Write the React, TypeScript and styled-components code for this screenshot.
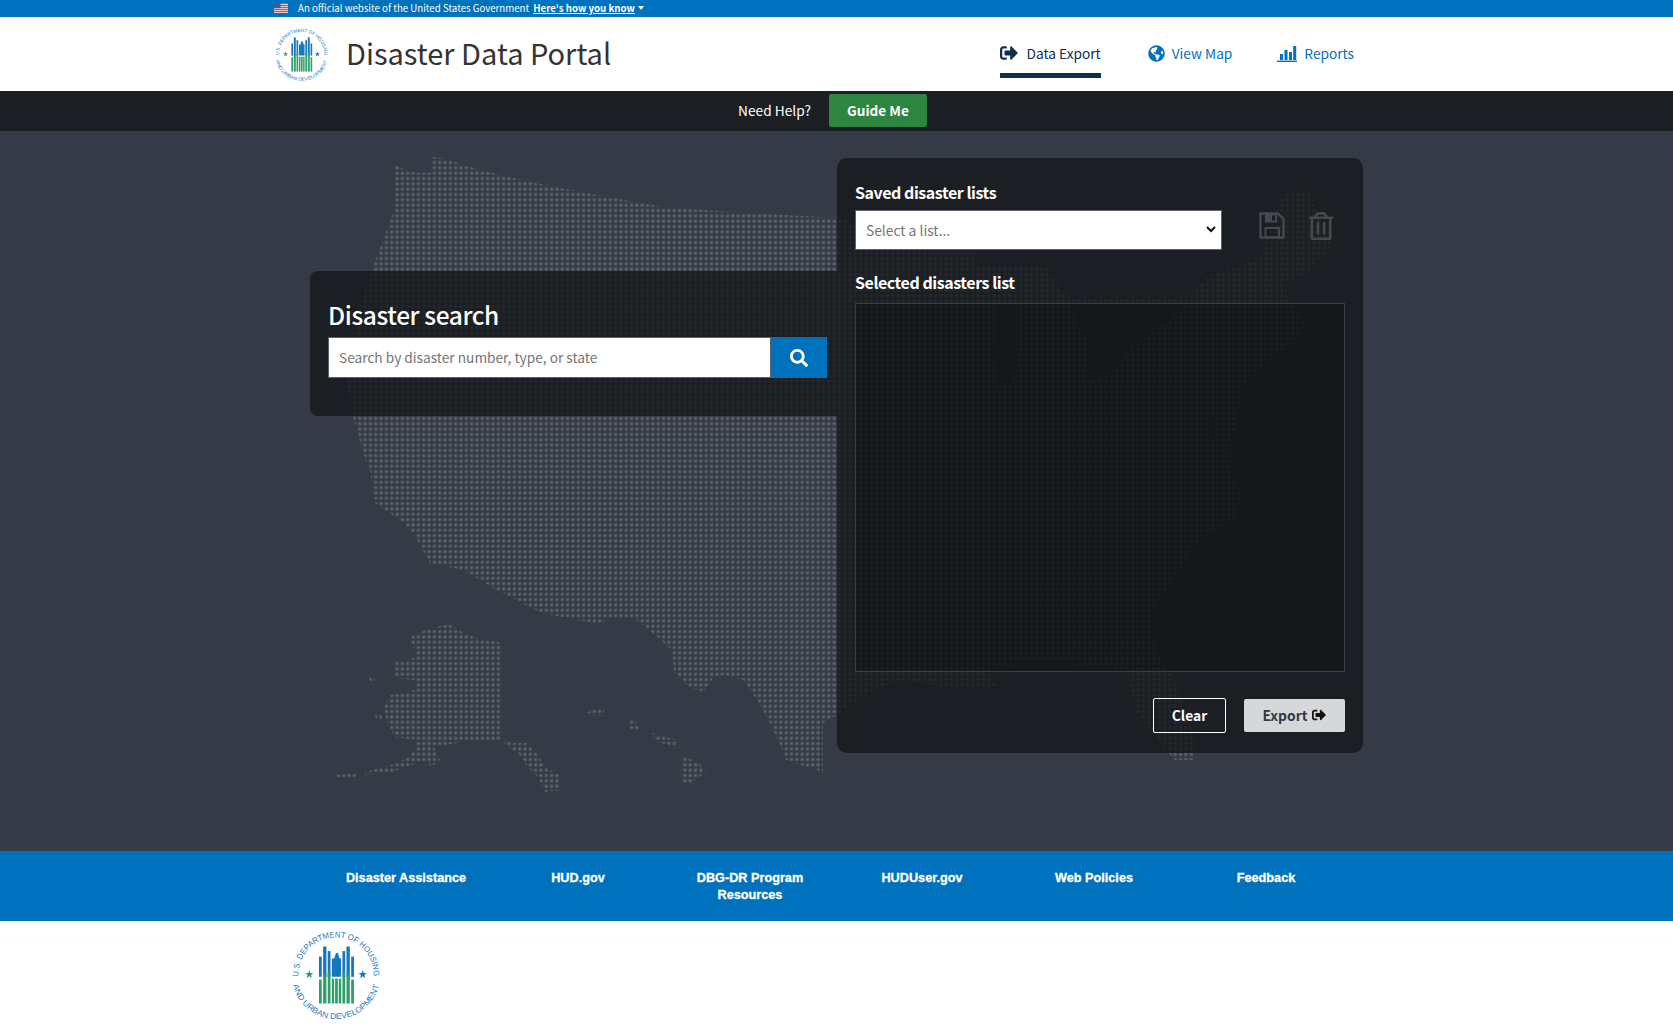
import React from "react";
import styled, { createGlobalStyle } from "styled-components";
import { FaSignOutAlt, FaGlobeAmericas, FaSearch, FaRegTrashAlt } from "react-icons/fa";

const SANS = `"Noto Sans CJK JP", "Source Sans Pro", "Noto Sans", sans-serif`;

const Global = createGlobalStyle`
  html, body { margin: 0; padding: 0; background: #fff; }
  body { font-family: ${SANS}; color: #212121; }
  * { box-sizing: border-box; }
`;

const Page = styled.div`
  width: 1673px;
  height: 1029px;
  overflow: hidden;
  display: flex;
  flex-direction: column;
`;

const Banner = styled.div`
  height: 17px;
  background: #0071bc;
  color: #fff;
  font-size: 9.7px;
  line-height: 16px;
  padding: 0 0 2px 274px;
  display: flex;
  align-items: center;
`;
const BannerText = styled.span`
  margin-left: 10px;
  white-space: nowrap;
`;
const BannerLink = styled.a`
  margin-left: 4px;
  font-weight: 700;
  color: #fff;
  text-decoration: underline;
  white-space: nowrap;
`;
const Caret = styled.span`
  margin-left: 3px;
  width: 0;
  height: 0;
  border-left: 3.5px solid transparent;
  border-right: 3.5px solid transparent;
  border-top: 4px solid #fff;
`;

const Header = styled.header`
  height: 74px;
  background: #fff;
  display: flex;
  align-items: center;
  padding-left: 274px;
`;
const Title = styled.h1`
  margin: 0 0 4px 17px;
  font-size: 29px;
  line-height: 40px;
  font-weight: 400;
  color: #333;
  white-space: nowrap;
`;
const Nav = styled.nav`
  margin-left: auto;
  margin-right: 319px;
  display: flex;
  gap: 45px;
  align-self: stretch;
`;
const NavItem = styled.a<{ $active?: boolean }>`
  display: flex;
  align-items: center;
  gap: ${(p) => (p.$active ? 9 : 7)}px;
  height: 61px;
  padding-top: 16px;
  margin-right: ${(p) => (p.$active ? 2 : 0)}px;
  font-size: 13.7px;
  color: ${(p) => (p.$active ? "#112e51" : "#0071bc")};
  border-bottom: 5px solid ${(p) => (p.$active ? "#112e51" : "transparent")};
  white-space: nowrap;
  svg { flex: none; }
`;

const HelpBar = styled.div`
  height: 40px;
  background: #1b1e23;
  display: flex;
  align-items: center;
  justify-content: center;
  gap: 18px;
  padding: 0 8px 1px 0;
`;
const HelpText = styled.span`
  color: #fff;
  font-size: 13.7px;
  margin-bottom: 2px;
`;
const GuideButton = styled.button`
  width: 98px;
  height: 33px;
  border: 0;
  border-radius: 2px;
  background: #2e8540;
  color: #fff;
  font-family: ${SANS};
  font-weight: 700;
  font-size: 13.6px;
  padding: 0 0 2px;
`;

const Main = styled.main`
  position: relative;
  height: 720px;
  background: #343a46;
  padding-top: 27px;
`;
const MapLayer = styled.svg`
  position: absolute;
  left: 0;
  top: 0;
`;
const Columns = styled.div`
  position: relative;
  width: 1053px;
  margin-left: 310px;
  display: flex;
  align-items: flex-start;
`;

const SearchPanel = styled.section`
  width: 527px;
  height: 145px;
  margin-top: 113px;
  padding: 26px 10px 0 18px;
  border-radius: 8px 0 0 8px;
  background: rgba(19, 21, 23, 0.75);
`;
const SearchTitle = styled.h2`
  margin: 0 0 4px;
  color: #fff;
  font-size: 24.5px;
  line-height: 36px;
  font-weight: 500;
  letter-spacing: -0.4px;
`;
const SearchRow = styled.div`
  display: flex;
  height: 41px;
`;
const SearchInput = styled.input`
  flex: 1;
  min-width: 0;
  height: 41px;
  border: 1px solid #5b616b;
  padding: 0 10px 2px;
  font-family: ${SANS};
  font-size: 13.7px;
  background: #fff;
  &::placeholder { color: #757575; opacity: 1; }
`;
const SearchButton = styled.button`
  width: 56px;
  border: 0;
  padding: 0;
  background: #0071bc;
  color: #fff;
  display: flex;
  align-items: center;
  justify-content: center;
`;

const ListPanel = styled.section`
  width: 526px;
  height: 595px;
  padding: 21px 18px 0 18px;
  border-radius: 10px;
  background: rgba(19, 21, 23, 0.75);
  display: flex;
  flex-direction: column;
`;
const FieldLabel = styled.h3`
  margin: 0;
  color: #fff;
  font-size: 16px;
  line-height: 26px;
  font-weight: 600;
  letter-spacing: -0.45px;
`;
const SavedRow = styled.div`
  display: flex;
  align-items: flex-start;
  margin-top: 5px;
  height: 40px;
`;
const SelectWrap = styled.div`
  position: relative;
  width: 367px;
  height: 40px;
`;
const ListSelect = styled.select`
  appearance: none;
  width: 100%;
  height: 40px;
  border: 1px solid #5b616b;
  border-radius: 0;
  padding: 0 10px;
  background: #fff;
  color: #757575;
  font-family: ${SANS};
  font-size: 13.8px;
`;
const Chevron = styled.svg`
  position: absolute;
  right: 6px;
  top: 16px;
  pointer-events: none;
`;
const IconButton = styled.button<{ $gap: number }>`
  margin-left: ${(p) => p.$gap}px;
  margin-top: 2px;
  border: 0;
  padding: 0;
  background: transparent;
  color: #45484d;
  display: flex;
`;
const SelectedLabel = styled(FieldLabel)`
  margin-top: 19px;
`;
const SelectedList = styled.div`
  margin-top: 8px;
  width: 490px;
  height: 369px;
  border: 1px solid #3b3e43;
  background: rgba(0, 0, 0, 0.22);
`;
const Actions = styled.div`
  display: flex;
  justify-content: flex-end;
  align-items: center;
  gap: 18px;
  width: 490px;
  margin-top: 26px;
`;
const ClearButton = styled.button`
  width: 73px;
  height: 35px;
  border: 1px solid #fff;
  border-radius: 2px;
  background: transparent;
  color: #fff;
  font-family: ${SANS};
  font-size: 13.8px;
  font-weight: 700;
  padding: 0 0 1px;
`;
const ExportButton = styled.button`
  width: 101px;
  height: 33px;
  border: 0;
  border-radius: 2px;
  background: #d6d7d9;
  color: #323a45;
  font-family: ${SANS};
  font-size: 13.8px;
  font-weight: 700;
  padding: 0 0 1px;
  display: flex;
  align-items: center;
  justify-content: center;
  gap: 5px;
  svg { color: #111; }
`;

const FooterLinks = styled.footer`
  height: 70px;
  background: #0071bc;
  padding: 19px 0 0 320px;
  display: grid;
  grid-template-columns: repeat(6, 172px);
  align-content: start;
`;
const FooterLink = styled.a`
  padding: 0 20px;
  color: #fff;
  font-family: "Liberation Sans", Arial, sans-serif;
  font-size: 12.7px;
  line-height: 17px;
  font-weight: 700;
  text-align: center;
  -webkit-text-stroke: 0.3px #fff;
`;
const FooterBase = styled.div`
  flex: 1;
  background: #fff;
  padding: 8px 0 0 290px;
`;

const Flag = () => (
  <svg width="14" height="10" viewBox="0 0 14 10" aria-hidden="true">
    <rect width="14" height="10" fill="#f3d9d9" />
    {[0, 2, 4, 6, 8].map((y) => (
      <rect key={y} y={y} width="14" height="1.1" fill="#c5525a" />
    ))}
    <rect width="6.5" height="5.2" fill="#3f5a9a" />
  </svg>
);

const COLS: [number, number, number][] = [
  [31.5, 3, 30],
  [36, 3.6, 19],
  [41, 3, 24],
  [57, 3, 24],
  [61.4, 3.6, 19],
  [66.5, 3, 30],
];
const GREENS: [number, number, number][] = [
  [31.5, 3, 55],
  [36, 3.6, 50],
  [41, 3, 47],
  [45.4, 2.6, 54],
  [49, 3, 54],
  [53, 2.6, 54],
  [57, 3, 47],
  [61.4, 3.6, 50],
  [66.5, 3, 55],
];

const Star = ({ cx, cy, r, fill }: { cx: number; cy: number; r: number; fill: string }) => {
  const pts = Array.from({ length: 10 }, (_, i) => {
    const a = -Math.PI / 2 + (i * Math.PI) / 5;
    const d = i % 2 ? r * 0.42 : r;
    return `${cx + d * Math.cos(a)},${cy + d * Math.sin(a)}`;
  }).join(" ");
  return <polygon points={pts} fill={fill} />;
};

const HudLogo = ({ size, id }: { size: number; id: string }) => (
  <svg width={size} height={size} viewBox="0 0 100 100" aria-hidden="true">
    <defs>
      <path id={`${id}-t`} d="M 9.6 57 A 41 41 0 1 1 90.4 57" fill="none" />
      <path id={`${id}-b`} d="M 2.7 58 A 48 48 0 0 0 97.3 58" fill="none" />
    </defs>
    <text fontFamily="'Liberation Sans', sans-serif" fontSize="8.8" fill="#1c7cc0">
      <textPath href={`#${id}-t`} startOffset="5" textLength="132" lengthAdjust="spacingAndGlyphs">
        U.S. DEPARTMENT OF HOUSING
      </textPath>
    </text>
    <text fontFamily="'Liberation Sans', sans-serif" fontSize="8.8" fill="#1c7cc0">
      <textPath href={`#${id}-b`} startOffset="3" textLength="128" lengthAdjust="spacingAndGlyphs">
        AND URBAN DEVELOPMENT
      </textPath>
    </text>
    {COLS.map(([x, w, t]) => (
      <rect key={x} x={x} y={t} width={w} height={52 - t} fill="#1577bd" />
    ))}
    <path d="M45.5 52 V32 L48 32 L50 26 L52 26 L54 32 L55.5 32 V52 Z" fill="#1577bd" />
    {GREENS.map(([x, w, t]) => (
      <rect key={x} x={x} y={t} width={w} height={81 - t} fill="#2f9e68" />
    ))}
    <Star cx={21} cy={49.5} r={4.6} fill="#2a9d6b" />
    <Star cx={79} cy={49.5} r={4.6} fill="#1577bd" />
  </svg>
);

const BarsIcon = () => (
  <svg width="20" height="17" viewBox="0 0 20 17" fill="#0071bc" aria-hidden="true">
    <rect x="3" y="9" width="3" height="6" />
    <rect x="7.5" y="5" width="3" height="10" />
    <rect x="12" y="7" width="3" height="8" />
    <rect x="16.2" y="1" width="3" height="14" />
    <rect x="0" y="15.6" width="20" height="1.4" />
  </svg>
);

const SaveIcon = () => (
  <svg width="26" height="27" viewBox="0 0 26 27" aria-hidden="true">
    <path d="M1.5 1.5 H19 L24.5 7 V25.5 H1.5 Z" fill="none" stroke="currentColor" strokeWidth="2.4" strokeLinejoin="round" />
    <path d="M6 1.5 H18 V10.5 H6 Z M13 3.5 V8.5 H16 V3.5 Z" fill="currentColor" fillRule="evenodd" />
    <rect x="6.5" y="16" width="13.5" height="9.5" fill="none" stroke="currentColor" strokeWidth="2" />
  </svg>
);

const US_PATH = `
M395 165 L410 172 L430 173 L432 157 L443 158 L480 170 L530 182 L597 195 L663 207 L747 213 L840 218
L930 253 L977 253 L975 265 L1047 267 L1053 277 L1063 293 L1075 300 L1190 297 L1207 277 L1260 257 L1272 225 L1280 200
L1292 190 L1310 190 L1318 215 L1337 240 L1307 273 L1287 283 L1287 300 L1310 327 L1273 357 L1245 383 L1238 410 L1237 427
L1228 447 L1230 473 L1242 493 L1237 517 L1210 533 L1190 550 L1173 583 L1152 610 L1152 637 L1160 657 L1173 677
L1197 743 L1193 760 L1175 760 L1157 740 L1137 713 L1133 700 L1128 673 L1123 670 L1080 667 L1073 660 L1020 660 L987 673 L997 687
L950 687 L900 680 L873 690 L840 713 L823 723 L823 772 L786 760 L781 747 L770 723 L759 703 L743 680 L723 675 L713 678 L704 692
L688 687 L674 672 L672 650 L649 630 L634 618 L604 618 L604 625 L541 613 L520 602 L497 590 L463 570 L430 563 L413 533 L400 520
L375 503 L370 470 L362 450 L358 433 L353 417 L347 380 L358 317 L367 283 L373 267 L383 240 L393 213 L395 193 Z
M995 303 L1020 303 L1020 345 L1015 380 L1000 388 L993 360 Z
M1070 303 L1190 303 L1170 320 L1130 350 L1110 375 L1085 382 L1087 340 L1075 318 Z
M1210 418 L1216 418 L1214 440 L1210 440 Z
M449 624 L425 630 L409 638 L415 650 L415 658 L393 662 L395 678 L415 680 L415 690 L391 695 L384 707 L386 717 L388 725 L395 737 L416 740 L416 747
L409 757 L397 763 L384 767 L365 772 L365 775 L391 772 L406 767 L427 760 L431 767 L440 760 L434 747 L447 745 L470 740 L502 740 L506 745 L520 755 L527 767
L538 777 L545 792 L561 790 L559 775 L545 767 L538 755 L527 743 L513 743 L502 740 L502 643 L477 638 L463 633 L457 628 Z
M368 675 L375 677 L375 683 L370 681 Z
M374 713 L382 715 L382 720 L376 718 Z
M336 775 L356 773 L356 778 L336 779 Z
M583 715 L595 708 L604 707 L604 716 Z
M627 723 L634 718 L640 730 L631 730 Z
M652 733 L677 740 L677 747 L656 742 Z
M681 755 L699 763 L706 772 L691 783 L681 783 Z
`;

const DotMap = () => (
  <MapLayer width="1673" height="720" viewBox="0 131 1673 720" aria-hidden="true">
    <defs>
      <pattern id="dots" x="0" y="0" width="5.33" height="5.33" patternUnits="userSpaceOnUse">
        <rect x="1" y="1" width="3.3" height="3.3" rx="1" fill="#5a5f6a" />
      </pattern>
    </defs>
    <path d={US_PATH} fill="url(#dots)" fillRule="evenodd" />
  </MapLayer>
);

export default function App() {
  return (
    <Page>
      <Global />
      <Banner>
        <Flag />
        <BannerText>An official website of the United States Government</BannerText>
        <BannerLink>Here's how you know</BannerLink>
        <Caret />
      </Banner>
      <Header>
        <HudLogo size={55} id="hdr" />
        <Title>Disaster Data Portal</Title>
        <Nav>
          <NavItem $active>
            <FaSignOutAlt size={18} />
            Data Export
          </NavItem>
          <NavItem>
            <FaGlobeAmericas size={17} />
            View Map
          </NavItem>
          <NavItem>
            <BarsIcon />
            Reports
          </NavItem>
        </Nav>
      </Header>
      <HelpBar>
        <HelpText>Need Help?</HelpText>
        <GuideButton>Guide Me</GuideButton>
      </HelpBar>
      <Main>
        <DotMap />
        <Columns>
          <SearchPanel>
            <SearchTitle>Disaster search</SearchTitle>
            <SearchRow>
              <SearchInput placeholder="Search by disaster number, type, or state" />
              <SearchButton aria-label="Search">
                <FaSearch size={18} />
              </SearchButton>
            </SearchRow>
          </SearchPanel>
          <ListPanel>
            <FieldLabel>Saved disaster lists</FieldLabel>
            <SavedRow>
              <SelectWrap>
                <ListSelect defaultValue="">
                  <option value="">Select a list...</option>
                </ListSelect>
                <Chevron width="10" height="7" viewBox="0 0 10 7" aria-hidden="true">
                  <path d="M1 1 L5 5 L9 1" fill="none" stroke="#111" strokeWidth="2" />
                </Chevron>
              </SelectWrap>
              <IconButton $gap={37} aria-label="Save">
                <SaveIcon />
              </IconButton>
              <IconButton $gap={22} aria-label="Delete">
                <FaRegTrashAlt size={28} />
              </IconButton>
            </SavedRow>
            <SelectedLabel>Selected disasters list</SelectedLabel>
            <SelectedList />
            <Actions>
              <ClearButton>Clear</ClearButton>
              <ExportButton>
                Export
                <FaSignOutAlt size={14} />
              </ExportButton>
            </Actions>
          </ListPanel>
        </Columns>
      </Main>
      <FooterLinks>
        <FooterLink>Disaster Assistance</FooterLink>
        <FooterLink>HUD.gov</FooterLink>
        <FooterLink>DBG-DR Program Resources</FooterLink>
        <FooterLink>HUDUser.gov</FooterLink>
        <FooterLink>Web Policies</FooterLink>
        <FooterLink>Feedback</FooterLink>
      </FooterLinks>
      <FooterBase>
        <HudLogo size={92} id="ftr" />
      </FooterBase>
    </Page>
  );
}
